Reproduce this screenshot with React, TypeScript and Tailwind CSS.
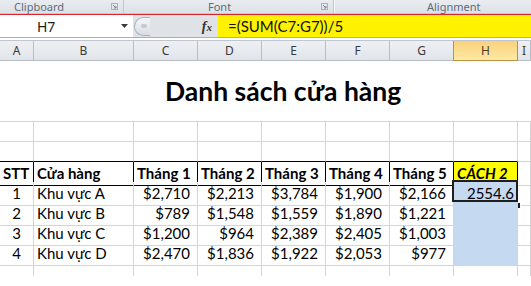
import React from "react";

const colLetters = ["A", "B", "C", "D", "E", "F", "G", "H", "I"];

const rows = [
  ["1", "Khu vực A", "$2,710", "$2,213", "$3,784", "$1,900", "$2,166"],
  ["2", "Khu vực B", "$789", "$1,548", "$1,559", "$1,890", "$1,221"],
  ["3", "Khu vực C", "$1,200", "$964", "$2,389", "$2,405", "$1,003"],
  ["4", "Khu vực D", "$2,470", "$1,836", "$1,922", "$2,053", "$977"],
];

const gridCols = "grid grid-cols-[34px_100px_64px_64px_64px_64px_64px_64px_1fr]";
const cellFont = { fontFamily: "Lato, 'Open Sans', sans-serif" };

const Launcher = () => (
  <svg width="7" height="7" viewBox="0 0 7 7" className="shrink-0">
    <rect x="0.5" y="0.5" width="6" height="6" fill="none" stroke="#a9b1bc" />
    <path d="M2 2 L5 5 M5 3 V5 H3" stroke="#7d8794" fill="none" />
  </svg>
);

const Ribbon = () => (
  <div
    className="flex h-[14px] bg-gradient-to-b from-[#e9ecf0] to-[#dde2e8] text-[11px] leading-[13px] text-[#5f6b7a] border-b border-[#c3c9d1]"
    style={{ fontFamily: "'Noto Sans', 'Open Sans', sans-serif" }}
  >
    <div className="flex w-[124px] items-start border-r border-[#c3c9d1]">
      <span className="ml-[14px]">Clipboard</span>
      <span className="ml-auto mr-[5px] mt-[3px]">
        <Launcher />
      </span>
    </div>
    <div className="flex w-[210px] items-start border-r border-[#c3c9d1] shadow-[1px_0_0_#f5f7f9]">
      <span className="ml-[84px]">Font</span>
      <span className="ml-auto mr-[5px] mt-[3px]">
        <Launcher />
      </span>
    </div>
    <div className="flex flex-1 items-start">
      <span className="ml-[93px]">Alignment</span>
    </div>
  </div>
);

const FormulaBar = () => (
  <div className="flex h-[23px] border-b border-[#a7afba] bg-[#dfe3e8]">
    <div
      className="flex w-[133px] items-center bg-white text-[14px] text-[#1c1c1c]"
      style={{ fontFamily: "'Noto Sans', 'Open Sans', sans-serif" }}
    >
      <span className="ml-[37px]">H7</span>
      <svg width="7" height="4" viewBox="0 0 7 4" className="ml-auto mr-[5px]">
        <path d="M0 0 H7 L3.5 4 Z" fill="#3a3a3a" />
      </svg>
    </div>
    <div className="flex w-[85px] items-center">
      <div className="ml-[1px] h-[19px] w-[16px] rounded-l-full border border-r-0 border-[#aab2bd] bg-gradient-to-b from-[#f4f6f8] to-[#d9dee4] flex items-center justify-center">
        <div className="ml-[3px] h-[4px] w-[6px] rounded-full bg-[#c4cad2]" />
      </div>
      <span
        className="ml-auto mr-[6px] text-[14px] font-bold italic text-[#333]"
        style={{ fontFamily: "'Liberation Serif', serif" }}
      >
        f<span className="text-[11px]">x</span>
      </span>
    </div>
    <div
      className="flex flex-1 items-center bg-[#fff200] pl-[10px] text-[15px] text-[#111]"
      style={cellFont}
    >
      =(SUM(C7:G7))/5
    </div>
  </div>
);

const ColumnHeaders = () => (
  <div
    className={`${gridCols} mt-[2px] h-[21px] border-t border-[#c0c6cf] text-[12px] text-[#3a3a3a]`}
    style={{ fontFamily: "'Noto Sans', 'Open Sans', sans-serif" }}
  >
    {colLetters.map((l) =>
      l === "H" ? (
        <div
          key={l}
          className="flex items-center justify-center border border-t-0 border-[#c2903f] bg-gradient-to-b from-[#f9d27a] to-[#fde9a6] text-[#4d3f22] -ml-[1px]"
        >
          {l}
        </div>
      ) : (
        <div
          key={l}
          className="flex items-center justify-center border-r border-b border-[#b7bec8] bg-gradient-to-b from-[#eef0f3] to-[#e1e5ea]"
        >
          {l}
        </div>
      )
    )}
  </div>
);

const EmptyRow = ({ black = false }: { black?: boolean }) => (
  <div className={`${gridCols} h-[20px]`}>
    {colLetters.map((l, i) => (
      <div
        key={l}
        className={`border-r border-b border-r-[#d4d4d4] ${
          black && i < 8 ? "border-b-black" : "border-b-[#d4d4d4]"
        }`}
      />
    ))}
  </div>
);

export default function App() {
  return (
    <div className="w-[531px] h-[286px] overflow-hidden bg-white">
      <Ribbon />
      <div className="h-[1px] bg-[#d8262b]" />
      <FormulaBar />
      <ColumnHeaders />

      {/* title row */}
      <div className="h-[61px] border-b border-[#d4d4d4] flex items-center" style={cellFont}>
        <span className="ml-[165px] mt-[1px] text-[26.5px] font-bold text-black">Danh sách cửa hàng</span>
      </div>

      <EmptyRow />
      <EmptyRow black />

      {/* table header */}
      <div className={`${gridCols} h-[20px] text-[15px] font-bold text-black`} style={cellFont}>
        {["STT", "Cửa hàng", "Tháng 1", "Tháng 2", "Tháng 3", "Tháng 4", "Tháng 5"].map((t) => (
          <div key={t} className="flex items-center px-[3px] border-r border-b border-black">
            {t}
          </div>
        ))}
        <div className="flex items-center px-[3px] border-r border-b border-black bg-[#ffff00] italic">
          CÁCH 2
        </div>
        <div className="border-r border-b border-[#d4d4d4]" />
      </div>

      {/* data rows */}
      {rows.map((r, ri) => (
        <div key={ri} className={`${gridCols} h-[20px] text-[15px] text-black`} style={cellFont}>
          <div className="flex items-center justify-center border-r border-b border-[#d4d4d4]">{r[0]}</div>
          <div className="flex items-center px-[3px] border-r border-b border-[#d4d4d4]">{r[1]}</div>
          {r.slice(2).map((v, i) => (
            <div key={i} className="flex items-center justify-end pr-[7px] border-r border-b border-[#d4d4d4]">
              {v}
            </div>
          ))}
          <div className="relative flex items-center justify-end pr-[3px] border-r border-b border-[#d4d4d4] bg-[#c5d9f1]">
            {ri === 0 ? "2554.6" : ""}
            {ri === 0 && (
              <>
                <div className="absolute left-[-2px] top-[-2px] h-[22px] w-[66px] border-2 border-[#1e1e1e]" />
                <div className="absolute right-[-3px] bottom-[-3px] h-[5px] w-[5px] bg-[#1e1e1e] outline outline-1 outline-white" />
              </>
            )}
          </div>
          <div className="border-r border-b border-[#d4d4d4]" />
        </div>
      ))}

      {/* last partial row */}
      <div className={`${gridCols} h-[14px]`}>
        {colLetters.map((l) => (
          <div key={l} className="border-r border-[#d4d4d4]" />
        ))}
      </div>
    </div>
  );
}
